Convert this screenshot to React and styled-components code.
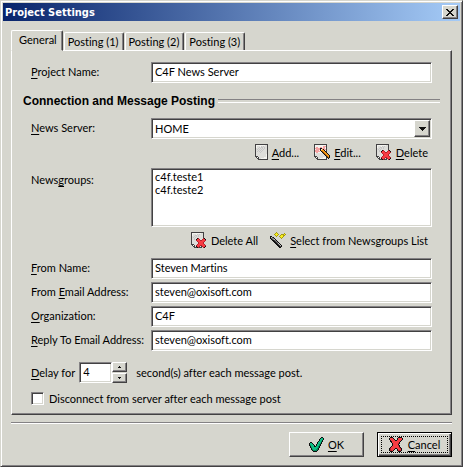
import React, { useState } from 'react';
import styled, { createGlobalStyle, css } from 'styled-components';

const face = '#d6d6ce';
const shadow = '#848284';
const dark = '#424142';

const GlobalStyle = createGlobalStyle`
  * {
    box-sizing: border-box;
  }
  body {
    margin: 0;
    background: ${face};
  }
  body, input, select, button {
    font-family: Lato, "Liberation Sans", Arial, sans-serif;
    font-size: 11px;
    font-variant-ligatures: none;
    line-height: 13px;
    color: #000;
  }
  u {
    text-underline-offset: 2px;
    text-decoration-thickness: 1px;
    text-decoration-skip-ink: none;
  }
`;

const sunken = css`
  border: 1px solid;
  border-color: ${shadow} #fff #fff ${shadow};
  box-shadow: inset 1px 1px ${dark}, inset -1px -1px ${face};
  background: #fff;
  border-radius: 0;
  outline: 0;
`;

const raised = css`
  border: 1px solid;
  border-color: #fff ${dark} ${dark} #fff;
  box-shadow: inset -1px -1px ${shadow};
  background: ${face};
  border-radius: 0;
  outline: 0;
`;

const Dialog = styled.div`
  padding: 2px;
  border: 1px solid;
  border-color: ${face} ${dark} ${dark} ${face};
  box-shadow: inset 1px 1px #fff, inset -1px -1px ${shadow};
  background: ${face};
`;

const TitleBar = styled.header`
  display: flex;
  align-items: center;
  justify-content: space-between;
  height: 18px;
  padding: 0 2px;
  background: linear-gradient(to right, #08246b, #a5cbf7);
`;

const Title = styled.h1`
  margin: 0;
  font-family: "DejaVu Sans Condensed", "DejaVu Sans", sans-serif;
  font-stretch: condensed;
  font-size: 11px;
  line-height: 13px;
  color: #fff;
`;

const CloseButton = styled.button`
  ${raised}
  display: flex;
  align-items: center;
  justify-content: center;
  width: 16px;
  height: 14px;
  padding: 0;
`;

const Body = styled.main`
  padding: 9px 8px 7px;
`;

const TabList = styled.div`
  display: flex;
  align-items: flex-end;
  gap: 1px;
  height: 20px;
`;

const Tab = styled.button`
  height: ${({ $active }) => ($active ? 21 : 18)}px;
  margin-bottom: ${({ $active }) => ($active ? -1 : 0)}px;
  padding: ${({ $active }) => ($active ? '0 5px 2px 7px' : '0 4px 0 3px')};
  border: 1px solid;
  border-color: #fff ${dark} ${face} #fff;
  border-bottom-width: ${({ $active }) => ($active ? 1 : 0)}px;
  border-radius: 2px 2px 0 0;
  box-shadow: inset -1px 0 ${shadow};
  background: ${face};
  outline: 0;
`;

const Panel = styled.form`
  padding: 11px 19px 9px;
  border: 1px solid;
  border-color: #fff ${dark} ${dark} #fff;
  box-shadow: inset -1px -1px ${shadow};
`;

const Fields = styled.div`
  display: grid;
  grid-template-columns: 120px 1fr;
  row-gap: 3px;
`;

const Label = styled.label`
  padding-top: ${({ $top }) => ($top ? 5 : 3)}px;
  white-space: nowrap;
`;

const TextBox = styled.input`
  ${sunken}
  width: ${({ $width }) => $width || '100%'};
  height: 21px;
  padding: 0 3px 2px;
`;

const Heading = styled.h2`
  display: flex;
  align-items: center;
  gap: 3px;
  margin: 10px -8px 9px;
  font-family: "Liberation Sans", Arial, sans-serif;
  font-size: 12px;
  line-height: 16px;
  white-space: nowrap;

  &::after {
    content: '';
    flex: 1;
    height: 2px;
    border-top: 1px solid ${shadow};
    border-bottom: 1px solid #fff;
  }
`;

const SelectBox = styled.div`
  position: relative;
`;

const Select = styled.select`
  ${sunken}
  display: block;
  appearance: none;
  width: 100%;
  height: 21px;
  padding: 0 20px 0 3px;
`;

const Arrow = styled.span`
  ${raised}
  position: absolute;
  top: 2px;
  right: 2px;
  display: flex;
  align-items: center;
  justify-content: center;
  width: 16px;
  height: 17px;
  pointer-events: none;
`;

const ListBox = styled.select`
  ${sunken}
  display: block;
  width: 100%;
  height: 59px;
  padding: 1px;
  overflow: hidden;

  option {
    min-height: 13px;
    padding: 0 2px;
    line-height: 13px;
  }
`;

const Actions = styled.div`
  display: flex;
  justify-content: flex-end;
  gap: ${({ $gap }) => $gap}px;
  padding: 5px 4px ${({ $bottom }) => $bottom}px;
`;

const Action = styled.button`
  display: flex;
  align-items: center;
  gap: 4px;
  height: 16px;
  padding: 0;
  border: 0;
  background: none;
  white-space: nowrap;
`;

const DelayRow = styled.div`
  display: flex;
  align-items: center;
  margin-top: 11px;
`;

const Spinner = styled.div`
  display: flex;
  margin: 0 9px 0 4px;
`;

const SpinButtons = styled.div`
  display: flex;
  flex-direction: column;
  justify-content: space-between;
`;

const SpinButton = styled.button`
  ${raised}
  display: flex;
  align-items: center;
  justify-content: center;
  width: 15px;
  height: 10px;
  padding: 0;
`;

const CheckRow = styled.label`
  display: flex;
  align-items: center;
  gap: 5px;
  margin-top: 9px;
`;

const CheckBox = styled.input`
  ${sunken}
  appearance: none;
  width: 13px;
  height: 13px;
  margin: 0;

  &:checked {
    background: radial-gradient(circle, #000 2px, #fff 3px);
  }
`;

const Divider = styled.hr`
  height: 2px;
  margin: 7px 0 8px;
  border: 0;
  border-top: 1px solid ${shadow};
  border-bottom: 1px solid #fff;
`;

const Footer = styled.footer`
  display: flex;
  justify-content: flex-end;
  gap: 13px;
`;

const PushButton = styled.button`
  ${raised}
  display: flex;
  align-items: center;
  justify-content: center;
  gap: 4px;
  width: 75px;
  height: 25px;
  padding: 0;
  ${({ $default }) => $default && css`
    border-color: #000;
    box-shadow: inset 1px 1px #fff, inset -1px -1px ${dark}, inset -2px -2px ${shadow};
  `}
`;

const Focus = styled.span`
  display: flex;
  align-items: center;
  justify-content: center;
  gap: 5px;
  width: 67px;
  height: 17px;
  border: 1px dotted #000;
`;

const palette = {
  K: '#101010',
  D: '#424142',
  G: '#848284',
  S: '#c6c6c6',
  L: '#dededa',
  W: '#f4f4f0',
  R: '#f73c42',
  r: '#b5202c',
  P: '#f7a2a2',
  O: '#f79a18',
  o: '#a55900',
  Y: '#f7ef21',
  y: '#a59a10',
  E: '#10bd84',
  e: '#008a5a',
};

const page = [
  'DDDDDDDDDDDDD',
  'DWWWWWWWWWLLD',
  'DWLLLWSLSLLLD',
  'DWLLSLSSLSLLD',
  'DLLSLSLSLSLLD',
  'DLSLSLSLSLLLD',
  'DLLSLSLSLLLLD',
  'DLSLSLSLLLLLD',
  'DLLLLSLLLLLLD',
  'DLLLLLLLLLLLD',
  'DLLLLLLLLLLWD',
  'DLLLLLLLLLLWD',
  'DDDLLLLLLLLWD',
  '.DWDLLLLLWWWD',
  '..DDLLWWWWWWD',
  '...DDDDDDDDDD',
];

const pageDelete = [
  'DDDDDDDDDDDDD...',
  'DWWWWWWWWWLLD...',
  'DWLLLWSLSLLLD...',
  'DWLLSSLSLLLLD...',
  'DLLSLSLSLLLLD...',
  'DLSLSLLLLLLLD...',
  'DLLSLLKrLLLLrK..',
  'DLLSLKRRrLLrRRK.',
  'DLLLLrRRRrrRRRr.',
  'DLLLLLrRRRRRRr..',
  'DLLLLLLrRRRRr...',
  'DLLLLLLrRRRRr...',
  'DDDLLLrRRRRRRr..',
  '.DWDLrRRRrrRRRr.',
  '..DDLKRRrLDrRRK.',
  '...DDDKrDDD.rK..',
];

const pageEdit = [
  'DDDDDDDDDDDDD...',
  'DWWWWWWWWWWWD...',
  'DWWWWWWWWPPPD...',
  'DWPPWWPPWPPWD...',
  'DPPPPPKKPPPWD...',
  'DWPPPPKWOKPPD...',
  'DPPPPWKOOOKWD...',
  'DPPPPPWKoOOKD...',
  'DWPPWWWWKoOOK...',
  'DWLLLLLLLKoOOK..',
  'DLLLLLLLLLKoOOK.',
  'DLLLLLLLLLLKoOOK',
  'DDDLLLLLLLLLKoOK',
  '.DWDLLLLLWWWDKoK',
  '..DDLLWWWWWWD.K.',
  '...DDDDDDDDDD...',
];

const wand = [
  '......y.........',
  '.....yYy......y.',
  '....yYYYy..yyyYy',
  '.....yYy..yYYyy.',
  'KK....y..yYYYy..',
  'KSDK......yYy...',
  'KDGGK......y....',
  '.KDGSK..........',
  '..KKDGK.........',
  '...KKDGK........',
  '....KKDGK.......',
  '.....KKDSK......',
  '......KKDSK.....',
  '.......KKDSK....',
  '........KKDK....',
  '.........KK.....',
];

const check = [
  '............KK.',
  '...........KEEK',
  '..........KEEEK',
  '..........KEEK.',
  '.........KEEeK.',
  '.KK.....KEEEK..',
  'KEEK....KEEeK..',
  'KEEEK..KEEeK...',
  'KeEEEK.KEEeK...',
  '.KEEEKKEEeK....',
  '.KeEEEEEEeK....',
  '..KEEEEEeK.....',
  '..KeEEEeeK.....',
  '...KeeeeK......',
  '....KKKK.......',
];

const cross = [
  '.KKK.....KKKK.',
  'KRRRK...KRRRRK',
  'KRRRRK..KRRRRK',
  '.KRRRRKKRRRRK.',
  '.KKRRRRRRRRK..',
  '..KRRRRRRRK...',
  '...KRRRRRrK...',
  '...KRRRRRK....',
  '...KRRRRRrK...',
  '..KRRRRRRRK...',
  '.KRRRRRRRRrK..',
  'KrRRRRKKRRRrK.',
  'KrRRRK..KRRRK.',
  'KrrRK...KrrrK.',
  '.KKK.....KKK..',
];

const closeCross = [
  'KK....KK',
  '.KK..KK.',
  '..KKKK..',
  '...KK...',
  '..KKKK..',
  '.KK..KK.',
  'KK....KK',
];

const down = ['KKKKKKK', '.KKKKK.', '..KKK..', '...K...'];
const smallDown = ['KKK', '.K.'];
const smallUp = ['.K.', 'KKK'];

const PixelIcon = ({ rows }) => (
  <svg width={rows[0].length} height={rows.length} shapeRendering="crispEdges" aria-hidden="true">
    {rows.map((row, y) =>
      [...row].map((c, x) =>
        palette[c] ? <rect key={`${x}-${y}`} x={x} y={y} width="1" height="1" fill={palette[c]} /> : null
      )
    )}
  </svg>
);

const tabs = ['General', 'Posting (1)', 'Posting (2)', 'Posting (3)'];

const App = () => {
  const [active, setActive] = useState(tabs[0]);
  const [delay, setDelay] = useState(4);

  return (
    <>
      <GlobalStyle />
      <Dialog role="dialog" aria-labelledby="title">
        <TitleBar>
          <Title id="title">Project Settings</Title>
          <CloseButton aria-label="Close"><PixelIcon rows={closeCross} /></CloseButton>
        </TitleBar>
        <Body>
          <TabList role="tablist">
            {tabs.map(tab => (
              <Tab
                key={tab}
                role="tab"
                aria-selected={active === tab}
                $active={active === tab}
                onClick={() => setActive(tab)}
              >
                {tab}
              </Tab>
            ))}
          </TabList>
          <Panel onSubmit={e => e.preventDefault()}>
            <Fields>
              <Label htmlFor="project"><u>P</u>roject Name:</Label>
              <TextBox id="project" defaultValue="C4F News Server" />
            </Fields>
            <Heading>Connection and Message Posting</Heading>
            <Fields>
              <Label htmlFor="server"><u>N</u>ews Server:</Label>
              <SelectBox>
                <Select id="server">
                  <option>HOME</option>
                </Select>
                <Arrow><PixelIcon rows={down} /></Arrow>
              </SelectBox>
            </Fields>
            <Actions $gap={15} $bottom={8}>
              <Action type="button"><PixelIcon rows={page} /><span><u>A</u>dd...</span></Action>
              <Action type="button"><PixelIcon rows={pageEdit} /><span><u>E</u>dit...</span></Action>
              <Action type="button"><PixelIcon rows={pageDelete} /><span><u>D</u>elete</span></Action>
            </Actions>
            <Fields>
              <Label htmlFor="groups" $top>News<u>g</u>roups:</Label>
              <ListBox id="groups" size={4}>
                <option>c4f.teste1</option>
                <option>c4f.teste2</option>
              </ListBox>
            </Fields>
            <Actions $gap={12} $bottom={10}>
              <Action type="button"><PixelIcon rows={pageDelete} /><span>Delete All</span></Action>
              <Action type="button"><PixelIcon rows={wand} /><span><u>S</u>elect from Newsgroups List</span></Action>
            </Actions>
            <Fields>
              <Label htmlFor="from"><u>F</u>rom Name:</Label>
              <TextBox id="from" defaultValue="Steven Martins" />
              <Label htmlFor="email">From <u>E</u>mail Address:</Label>
              <TextBox id="email" defaultValue="steven@oxisoft.com" />
              <Label htmlFor="org"><u>O</u>rganization:</Label>
              <TextBox id="org" defaultValue="C4F" />
              <Label htmlFor="reply"><u>R</u>eply To Email Address:</Label>
              <TextBox id="reply" defaultValue="steven@oxisoft.com" />
            </Fields>
            <DelayRow>
              <label htmlFor="delay"><u>D</u>elay for</label>
              <Spinner>
                <TextBox id="delay" $width="33px" value={delay} onChange={e => setDelay(Number(e.target.value) || 0)} />
                <SpinButtons>
                  <SpinButton type="button" aria-label="More" onClick={() => setDelay(delay + 1)}>
                    <PixelIcon rows={smallUp} />
                  </SpinButton>
                  <SpinButton type="button" aria-label="Less" onClick={() => setDelay(Math.max(0, delay - 1))}>
                    <PixelIcon rows={smallDown} />
                  </SpinButton>
                </SpinButtons>
              </Spinner>
              <span>second(s) after each message post.</span>
            </DelayRow>
            <CheckRow>
              <CheckBox type="checkbox" />
              Disconnect from server after each message post
            </CheckRow>
          </Panel>
          <Divider />
          <Footer>
            <PushButton><PixelIcon rows={check} /><span><u>O</u>K</span></PushButton>
            <PushButton $default>
              <Focus><PixelIcon rows={cross} /><span><u>C</u>ancel</span></Focus>
            </PushButton>
          </Footer>
        </Body>
      </Dialog>
    </>
  );
};

export default App;
